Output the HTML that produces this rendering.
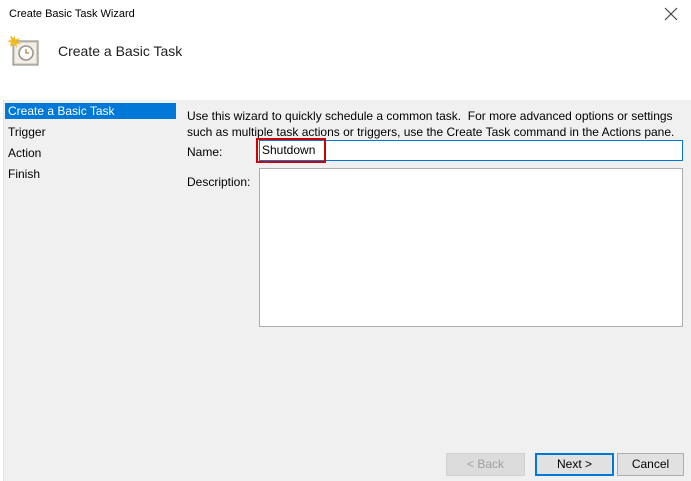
<!DOCTYPE html>
<html><head><meta charset="utf-8"><style>
*{margin:0;padding:0;box-sizing:border-box}
body{width:691px;height:481px;background:#fff;font-family:"Liberation Sans",sans-serif;font-size:12px;color:#000;position:relative;overflow:hidden}
.a{position:absolute}
.gray{left:3px;top:100px;width:688px;height:381px;background:#f0f0f0;border-left:1px solid #e4e4e4}
.nav{font-size:12px;left:8px}
.btn{height:23px;border:1px solid #adadad;background:#e1e1e1;text-align:center;line-height:21px;font-size:12px}
</style></head><body>
<div class="a" style="left:9px;top:8px;font-size:11px">Create Basic Task Wizard</div>
<svg class="a" style="left:664px;top:7px" width="14" height="14" viewBox="0 0 14 14"><path d="M1 1L13 13M13 1L1 13" stroke="#444" stroke-width="1.2"/></svg>
<svg class="a" style="left:7px;top:35px" width="34" height="32" viewBox="0 0 34 32">
<rect x="6" y="6" width="25" height="24" fill="#d8d4cc" stroke="#8a8478"/>
<rect x="8" y="8" width="21" height="20" fill="#f2efe8"/>
<circle cx="19" cy="18" r="7" fill="#fff" stroke="#9a9488" stroke-width="1.5"/>
<path d="M19 14v4h3" stroke="#b08a30" stroke-width="1.3" fill="none"/>
<path d="M7 0l1.5 4.5L13 3l-3 3.5 4 2-4.5.5L10 13 7 9 3 12l1-4.5L0 6l4.5-1L3 1l4 2z" fill="#f5b820"/>
</svg>
<div class="a" style="left:58px;top:43px;font-size:14px;color:#1e1e1e">Create a Basic Task</div>
<div class="a gray"></div>
<div class="a" style="left:5px;top:103px;width:171px;height:16px;background:#0078d7"></div>
<div class="a nav" style="top:104px;color:#fff">Create a Basic Task</div>
<div class="a nav" style="top:125px">Trigger</div>
<div class="a nav" style="top:146px">Action</div>
<div class="a nav" style="top:167px">Finish</div>
<div class="a" style="left:187px;top:108px;line-height:16px;font-size:12px">Use this wizard to quickly schedule a common task.&nbsp; For more advanced options or settings<br>such as multiple task actions or triggers, use the Create Task command in the Actions pane.</div>
<div class="a" style="left:187px;top:145px">Name:</div>
<div class="a" style="left:259px;top:140px;width:424px;height:21px;background:#fff;border:1px solid #0078d7"></div>
<div class="a" style="left:256px;top:138px;width:70px;height:25px;border:2px solid #d00000"></div>
<div class="a" style="left:262px;top:143px">Shutdown</div>
<div class="a" style="left:187px;top:175px">Description:</div>
<div class="a" style="left:259px;top:168px;width:424px;height:159px;background:#fff;border:1px solid #adadad"></div>
<div class="a btn" style="left:446px;top:453px;width:79px;color:#a0a0a0;border-color:#d0d0d0;background:#dcdcdc">&lt; Back</div>
<div class="a btn" style="left:535px;top:453px;width:79px;border:2px solid #0078d7;line-height:19px">Next &gt;</div>
<div class="a btn" style="left:617px;top:453px;width:67px">Cancel</div>
</body></html>
